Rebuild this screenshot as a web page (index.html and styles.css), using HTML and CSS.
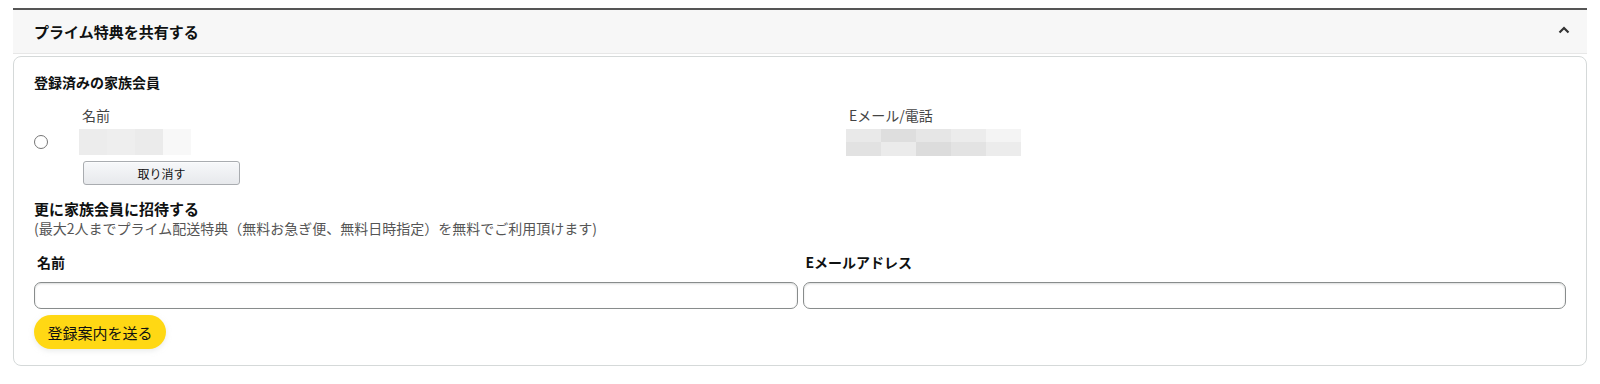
FILE: index.html
```html
<!DOCTYPE html>
<html lang="ja">
<head>
<meta charset="utf-8">
<link rel="stylesheet" href="styles.css">
</head>
<body>
<div class="wrap">
  <div class="header">
    <span class="title">プライム特典を共有する</span>
    <svg class="chev" width="12" height="8" viewBox="0 0 12 8"><path d="M1.5 6.5 L6 2 L10.5 6.5" fill="none" stroke="#333" stroke-width="2.2"/></svg>
  </div>
  <div class="card">
    <div class="h-sub">登録済みの家族会員</div>
    <div class="members">
      <div class="col-radio"><span class="radio"></span></div>
      <div class="col-name">
        <div class="lbl">名前</div>
        <div class="mosaic m-name">
          <i class="n1"></i><i class="n2"></i><i class="n3"></i><i class="n4"></i>
        </div>
        <button class="btn-cancel">取り消す</button>
      </div>
      <div class="col-mail">
        <div class="lbl">Eメール/電話</div>
        <div class="mosaic m-mail">
          <i class="e1"></i><i class="e2"></i><i class="e3"></i><i class="e4"></i><i class="e5"></i>
          <i class="e6"></i><i class="e7"></i><i class="e8"></i><i class="e9"></i><i class="e10"></i>
        </div>
      </div>
    </div>
    <div class="h-invite">更に家族会員に招待する</div>
    <div class="note">(最大2人までプライム配送特典（無料お急ぎ便、無料日時指定）を無料でご利用頂けます)</div>
    <div class="form">
      <div class="field">
        <label class="flbl">名前</label>
        <input class="inp" type="text">
      </div>
      <div class="field">
        <label class="flbl">Eメールアドレス</label>
        <input class="inp" type="text">
      </div>
    </div>
    <button class="btn-send">登録案内を送る</button>
  </div>
</div>
</body>
</html>
```
FILE: styles.css
```css
* { box-sizing: border-box; }
html, body { margin: 0; padding: 0; background: #fff; }
body {
  font-family: "Noto Sans CJK JP", "Noto Sans", sans-serif;
  color: #0f1111;
}
.wrap {
  margin: 8px 13px 0 13px;
}
.header {
  height: 46px;
  border-top: 2px solid #555;
  background: #f7f7f7;
  border-bottom: 1px solid #e7e7e7;
  display: flex;
  align-items: center;
  justify-content: space-between;
  padding: 0 17px 0 21px;
}
.title {
  font-size: 15px;
  font-weight: 700;
  line-height: 20px;
  margin-top: 1px;
}
.chev { display: block; margin-top: -3px; }
.card {
  margin-top: 2px;
  border: 1px solid #d5d9d9;
  border-radius: 8px;
  padding: 15px 20px 16px 20px;
}
.h-sub {
  font-size: 14px;
  font-weight: 700;
  line-height: 20px;
}
.members {
  display: flex;
  margin-top: 13px;
}
.col-radio {
  width: 45px;
  padding-top: 30px;
}
.radio {
  display: block;
  width: 14px;
  height: 14px;
  border: 1px solid #767676;
  border-radius: 50%;
  background: #fff;
}
.col-name {
  width: 767px;
}
.lbl {
  font-size: 14px;
  color: #444;
  line-height: 20px;
  padding-left: 3px;
}
.mosaic i { display: block; }
.m-name {
  margin-top: 4px;
  display: grid;
  grid-template-columns: repeat(4, 28px);
  height: 26px;
  width: 112px;
}
.m-mail {
  margin-top: 4px;
  display: grid;
  grid-template-columns: repeat(5, 35px);
  grid-template-rows: 13px 14px;
  width: 175px;
}
.n1 { background: #ececec; }
.n2 { background: #eeeeee; }
.n3 { background: #ebebeb; }
.n4 { background: #f8f8f8; }
.e1 { background: #e9e9e9; }
.e2 { background: #dedede; }
.e3 { background: #e6e6e6; }
.e4 { background: #ececec; }
.e5 { background: #f4f4f4; }
.e6 { background: #e2e2e2; }
.e7 { background: #ebebeb; }
.e8 { background: #dcdcdc; }
.e9 { background: #e3e3e3; }
.e10 { background: #ececec; }
.btn-cancel {
  display: block;
  margin-top: 6px;
  margin-left: 4px;
  width: 157px;
  height: 24px;
  border: 1px solid #a9acb0;
  border-radius: 3px;
  background: linear-gradient(#f7f8fa, #e7e9ec);
  font-family: inherit;
  font-size: 12px;
  color: #111;
  padding: 0;
  box-shadow: 0 1px 0 rgba(255,255,255,.6) inset;
}
.h-invite {
  margin-top: 14px;
  font-size: 15px;
  font-weight: 700;
  line-height: 20px;
}
.note {
  font-size: 14px;
  color: #555;
  line-height: 18px;
}
.form {
  display: grid;
  grid-template-columns: 1fr 1fr;
  column-gap: 5px;
  margin-top: 15px;
}
.field { display: flex; flex-direction: column; }
.flbl {
  font-size: 14px;
  font-weight: 700;
  line-height: 20px;
  padding-left: 3px;
}
.inp {
  margin-top: 10px;
  height: 27px;
  border: 1px solid #888c8c;
  border-radius: 7px;
  font-family: inherit;
  font-size: 13px;
  padding: 0 8px;
  box-shadow: 0 1px 2px rgba(15,17,17,.15) inset;
  width: 100%;
}
.btn-send {
  display: block;
  margin-top: 6px;
  width: 132px;
  height: 34px;
  padding: 0;
  border: none;
  border-radius: 17px;
  background: #ffd814;
  font-family: inherit;
  font-size: 15px;
  color: #0f1111;
  box-shadow: 0 2px 5px rgba(213,217,217,.5);
}
```
